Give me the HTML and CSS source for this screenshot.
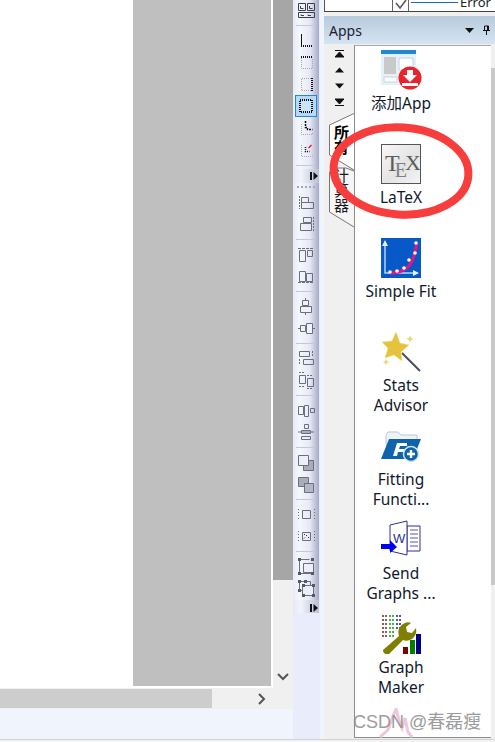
FILE: index.html
```html
<!DOCTYPE html>
<html lang="zh-CN">
<head>
    <meta charset="UTF-8">
    <meta name="viewport" content="width=device-width, initial-scale=1.0">
    <title>Apps</title>
    <link rel="stylesheet" href="styles.css">
</head>
<body>
    <div class="window">
        <div class="workspace">
            <!-- graph page and its scrollbars -->
            <div class="main">
                <div class="doc-row">
                    <div class="doc">
                        <div class="page"></div>
                        <div class="desk"></div>
                    </div>
                    <div class="vscroll">
                        <div class="vscroll-thumb"></div>
                        <svg class="chevron" width="12" height="8" viewBox="0 0 12 8"><path d="M1 1l5 5 5-5" fill="none" stroke="#555" stroke-width="2"/></svg>
                    </div>
                </div>
                <div class="hscroll">
                    <div class="hscroll-thumb"></div>
                    <svg class="chevron-right" width="8" height="12" viewBox="0 0 8 12"><path d="M1 1l5 5-5 5" fill="none" stroke="#555" stroke-width="2"/></svg>
                </div>
                <div class="main-foot"></div>
            </div>

            <!-- vertical toolbars -->
            <div class="dock">
                <div class="toolbar toolbar-top">
                    <div class="tool"><svg width="22" height="22" viewBox="0 0 22 22" fill="none" stroke="#3c3f4a"><path d="M3.500 4.500h7v7h-7zM12.500 4.500h7v7h-7zM3.500 13.500h16v5h-16z"/><path d="M5.500 7v2.500h3M14.500 7v2.500h3M6 15.500v1h3M13 15.500v1h3"/></svg></div>
                    <div class="sep"></div>
                    <div class="tool"><svg width="22" height="22" viewBox="0 0 22 22" fill="none"><path d="M6.500 5v12.500" stroke="#111"/><path d="M6 17h12" stroke="#111" stroke-width="2" stroke-dasharray="1 1"/></svg></div>
                    <div class="tool"><svg width="22" height="22" viewBox="0 0 22 22" fill="none"><path d="M6.500 7v10.500h11V7" stroke="#a4a6b2" stroke-dasharray="1 1"/><path d="M6 6h12" stroke="#111" stroke-width="2" stroke-dasharray="1 1"/></svg></div>
                    <div class="tool"><svg width="22" height="22" viewBox="0 0 22 22" fill="none"><path d="M16 5.500H6.500v12H16" stroke="#a4a6b2" stroke-dasharray="1 1"/><path d="M17 5v13" stroke="#111" stroke-width="2" stroke-dasharray="1 1"/></svg></div>
                    <div class="tool tool-on"><svg width="20" height="20" viewBox="0 0 20 20" fill="none"><path d="M4 4h12v12H4z" fill="#cbe4f8" stroke="#111" stroke-width="2" stroke-dasharray="1 1"/></svg></div>
                    <div class="tool"><svg width="22" height="22" viewBox="0 0 22 22" fill="none"><path d="M6.500 7v10.500h11v-2" stroke="#a4a6b2" stroke-dasharray="1 1"/><path d="M10.500 4v6.500h2v2h5" stroke="#111" stroke-width="1.500" stroke-dasharray="2 1"/></svg></div>
                    <div class="tool"><svg width="22" height="22" viewBox="0 0 22 22" fill="none"><path d="M6.500 6v11.500h11v-2" stroke="#a4a6b2" stroke-dasharray="1 1"/><path d="M10.500 8v4.500h4" stroke="#111" stroke-width="1.500" stroke-dasharray="1 1"/><path d="M13.500 9l3-3" stroke="#e02020" stroke-width="1.500"/></svg></div>
                    <div class="sep"></div>
                    <div class="toolbar-end toolbar-end-top"><svg width="8" height="8" viewBox="0 0 8 8"><path d="M0 0h2v8H0zM3.500 0L8 4 3.500 8z" fill="#111"/></svg></div>
                </div>

                <div class="toolbar toolbar-bottom">
                    <div class="grip"></div>
                    <div class="tool"><svg width="22" height="22" viewBox="0 0 22 22" fill="none" stroke="#6a6e80"><path d="M4.500 5v13" stroke-dasharray="2 1"/><path d="M6.500 6.500h7v5h-7zM6.500 11.500h12v6h-12z"/></svg></div>
                    <div class="tool"><svg width="22" height="22" viewBox="0 0 22 22" fill="none" stroke="#6a6e80"><path d="M18.500 4v14" stroke-dasharray="2 1"/><path d="M8.500 4.500h8v5h-8zM5.500 10.500h11v7h-11z"/></svg></div>
                    <div class="sep"></div>
                    <div class="tool"><svg width="22" height="22" viewBox="0 0 22 22" fill="none" stroke="#6a6e80"><path d="M3 5.500h15" stroke-dasharray="3 1"/><path d="M4.500 7.500h6v11h-6zM12.500 7.500h5v6h-5z"/></svg></div>
                    <div class="tool"><svg width="22" height="22" viewBox="0 0 22 22" fill="none" stroke="#6a6e80"><path d="M3 17.500h15" stroke-dasharray="3 1"/><path d="M4.500 6.500h6v10h-6zM11.500 8.500h6v8h-6z"/></svg></div>
                    <div class="sep"></div>
                    <div class="tool"><svg width="22" height="22" viewBox="0 0 22 22" fill="none" stroke="#6a6e80"><path d="M10.500 3v17"/><path d="M7.500 5.500h6v5h-6z" fill="#f0f2fb"/><path d="M5.500 11.500h11v6h-11z" fill="#f0f2fb"/></svg></div>
                    <div class="tool"><svg width="22" height="22" viewBox="0 0 22 22" fill="none" stroke="#6a6e80"><path d="M3 11.500h17"/><path d="M5.500 8.500h5v6h-5z" fill="#f0f2fb"/><path d="M11.500 6.500h6v10h-6z" fill="#f0f2fb"/></svg></div>
                    <div class="sep"></div>
                    <div class="tool"><svg width="22" height="22" viewBox="0 0 22 22" fill="none" stroke="#6a6e80"><path d="M4.500 4.500h10v5h-10zM8.500 12.500h10v5h-10z"/><path d="M17.500 4v6M4.500 12v6" stroke-dasharray="2 1"/></svg></div>
                    <div class="tool"><svg width="22" height="22" viewBox="0 0 22 22" fill="none" stroke="#6a6e80"><path d="M4.500 6.500h6v8h-6zM12.500 9.500h6v8h-6z"/><path d="M4 3.500h6M12 6.500h6M4 17.500h6M12 19.500h6" stroke-dasharray="2 1"/></svg></div>
                    <div class="sep"></div>
                    <div class="tool"><svg width="22" height="22" viewBox="0 0 22 22" fill="none" stroke="#6a6e80"><path d="M3.500 7.500h5v8h-5zM9.500 6.500h4v11h-4zM15.500 9.500h4v4h-4z"/></svg></div>
                    <div class="tool"><svg width="22" height="22" viewBox="0 0 22 22" fill="none" stroke="#6a6e80"><path d="M9.500 3.500h4v4h-4zM3 11h16"/><path d="M6.500 9.500h9v3h-9zM6.500 15.500h9v3h-9z"/></svg></div>
                    <div class="sep"></div>
                    <div class="tool"><svg width="22" height="22" viewBox="0 0 22 22" stroke="#6a6e80"><path d="M8.500 9.500h10v10h-10z" fill="#a9acb8"/><path d="M3.500 4.500h10v10h-10z" fill="#eceef9"/></svg></div>
                    <div class="tool"><svg width="22" height="22" viewBox="0 0 22 22" stroke="#6a6e80"><path d="M3.500 4.500h10v9h-10z" fill="#a9acb8"/><path d="M9.500 10.500h9v9h-9z" fill="#b4b7c3"/></svg></div>
                    <div class="sep"></div>
                    <div class="tool"><svg width="22" height="22" viewBox="0 0 22 22" fill="none" stroke="#6a6e80"><path d="M7.500 7.500h8v8h-8z"/><path d="M3.500 6v11M19.500 6v11" stroke-dasharray="1 2"/></svg></div>
                    <div class="tool"><svg width="22" height="22" viewBox="0 0 22 22" fill="none" stroke="#6a6e80"><path d="M7.500 7.500h8v8h-8z"/><path d="M9 13.500l1-1M11 11l1-1M13 13l1-1M9 9.500h1" stroke="#333"/><path d="M3.500 6v11M19.500 6v11" stroke-dasharray="1 2"/></svg></div>
                    <div class="sep"></div>
                    <div class="tool"><svg width="22" height="22" viewBox="0 0 22 22" stroke="#6a6e80"><path d="M4.500 4.500h10M4.500 4.500v14h14v-4" fill="none"/><path d="M8.500 8.500h10v9h-10z" fill="#eceef9"/><path d="M3 3h3v3H3zM16 3h3v3h-3zM3 17h3v3H3zM16 17h3v3h-3z" fill="#55586a" stroke="none"/></svg></div>
                    <div class="tool"><svg width="22" height="22" viewBox="0 0 22 22" stroke="#6a6e80"><path d="M4.500 4.500h11v6M4.500 4.500v9h4" fill="none"/><path d="M7.500 8.500h11v10h-11z" fill="#eceef9"/><path d="M3 3h3v3H3zM9 3h3v3H9zM3 12h3v3H3zM7 7h3v3H7zM17 7h3v3h-3zM7 17h3v3H7zM17 17h3v3h-3z" fill="#55586a" stroke="none"/></svg></div>
                    <div class="toolbar-end"><svg width="8" height="8" viewBox="0 0 8 8"><path d="M0 0h2v8H0zM3.500 0L8 4 3.500 8z" fill="#111"/></svg></div>
                </div>
            </div>
            <div class="gutter"></div>

            <!-- Apps panel -->
            <div class="panel">
                <div class="legend">
                    <div class="legend-check"><svg width="14" height="10" viewBox="0 0 14 10"><path d="M2 3l4 5 6-8" fill="none" stroke="#555" stroke-width="1.500"/></svg></div>
                    <div class="legend-line"></div>
                    <span class="legend-text">Error</span>
                </div>
                <div class="panel-head">
                    <span class="panel-title">Apps</span>
                    <svg class="panel-menu" width="9" height="5" viewBox="0 0 9 5"><path d="M0 0h9L4.500 5z" fill="#111"/></svg>
                    <svg class="panel-pin" width="9" height="10" viewBox="0 0 9 10"><path d="M2.500 1h4v4.500h-4zM1 5.500h7M4.500 6v4M5.500 1v4" fill="none" stroke="#111"/></svg>
                </div>
                <div class="panel-body">
                    <div class="rail">
                        <div class="rail-nav">
                            <svg width="9" height="8" viewBox="0 0 9 8"><path d="M0 .5h9M4.500 2L9 7H0z" stroke="#111" stroke-width="1" fill="#111"/></svg>
                            <svg width="9" height="8" viewBox="0 0 9 8"><path d="M4.500 1.500L9 6.500H0z" fill="#111"/></svg>
                            <svg width="9" height="8" viewBox="0 0 9 8"><path d="M0 1.500h9L4.500 6.500z" fill="#111"/></svg>
                            <svg width="9" height="8" viewBox="0 0 9 8"><path d="M0 1h9L4.500 6zM0 7.500h9" stroke="#111" stroke-width="1" fill="#111"/></svg>
                        </div>
                        <div class="tab tab-active">
                            <svg class="tab-shape" width="30" height="60" viewBox="0 0 30 60"><path d="M30 .5L5.500 12v30L30 57" fill="#fff" stroke="#777"/></svg>
                            <span class="tab-label">所有</span>
                        </div>
                        <div class="tab">
                            <svg class="tab-shape" width="30" height="62" viewBox="0 0 30 62"><path d="M30 4l-8-3h-8L5.500 5v40L30 60" fill="#f5f5f5" stroke="#777"/></svg>
                            <span class="tab-label">计算器</span>
                        </div>
                    </div>

                    <div class="gallery">
                        <div class="gallery-item">
                            <svg class="app-icon app-icon-add" width="46" height="40" viewBox="0 0 46 40">
                                <path d="M0 0h35v35H0z" fill="#e4f0fa"/>
                                <path d="M0 0h35v4H0z" fill="#1f88d0"/>
                                <path d="M3 7h12v17H3z" fill="#c9c9c9"/>
                                <path d="M18 8h14v12H18z" fill="#fff" stroke="#c2d4e2"/>
                                <path d="M3 27h13v5H3zM19 24h11v3H19z" fill="#fff" stroke="#c2d4e2"/>
                                <circle cx="29" cy="28" r="11.500" fill="#e9222c"/>
                                <path d="M26 20h6v5h4l-7 7-7-7h4zM21 33h16v3H21z" fill="#fff"/>
                            </svg>
                            <div class="app-label">添加App</div>
                        </div>
                        <div class="gallery-item">
                            <div class="tex-icon">
                                <span class="tex-t">T</span><span class="tex-e">E</span><span class="tex-x">X</span>
                            </div>
                            <div class="app-label">LaTeX</div>
                        </div>
                        <div class="gallery-item">
                            <svg class="app-icon" width="40" height="40" viewBox="0 0 40 40">
                                <path d="M0 0h40v40H0z" fill="#0659c6"/>
                                <path d="M4 7v28h31" fill="none" stroke="#b7d3f2" stroke-width="1.500"/>
                                <path d="M4 2l3 6H1zM38 35l-6 3v-6z" fill="#eaf3fc"/>
                                <path d="M8 35c8 0 14-1 20-7 5-6 6-14 8-23" fill="none" stroke="#e5157f" stroke-width="3"/>
                                <g fill="#fff"><circle cx="9" cy="34" r="1.800"/><circle cx="16" cy="33" r="1.800"/><circle cx="23" cy="30" r="1.800"/><circle cx="28" cy="22" r="1.800"/><circle cx="34" cy="15" r="1.800"/><circle cx="35" cy="5" r="1.800"/></g>
                            </svg>
                            <div class="app-label">Simple Fit</div>
                        </div>
                        <div class="gallery-item">
                            <svg class="app-icon" width="40" height="40" viewBox="0 0 40 40">
                                <path d="M21 21l18 18" stroke="#444e5c" stroke-width="2"/>
                                <path d="M15 0l4 11 9 2-8 7 1 9-8-6-9 3 3-10-6-6 10-1z" fill="#e6c33c" stroke="#f1dc8b" stroke-width=".5"/>
                                <path d="M29 3l1 3 3 1-3 1-1 3-1-3-3-1 3-1zM5 27l1 2 2 1-2 1-1 2-1-2-2-1 2-1z" fill="#efd374"/>
                            </svg>
                            <div class="app-label">Stats<br>Advisor</div>
                        </div>
                        <div class="gallery-item">
                            <svg class="app-icon" width="40" height="40" viewBox="0 0 40 40">
                                <path d="M5 9l2-3h10l3 3h16v9H5z" fill="#eef3f8" stroke="#b9c9d8"/>
                                <path d="M8 13h32l-8 20H0z" fill="#0f63ad"/>
                                <path d="M16 17h10v3h-7l-1 3h6l-1 3h-6l-1 4h-4z" fill="#fff"/>
                                <circle cx="30" cy="28" r="7.500" fill="#0f63ad" stroke="#cfe0ee" stroke-width="1.500"/>
                                <path d="M26 28h8M30 24v8" stroke="#fff" stroke-width="2.500"/>
                            </svg>
                            <div class="app-label">Fitting<br>Functi...</div>
                        </div>
                        <div class="gallery-item">
                            <svg class="app-icon" width="40" height="40" viewBox="0 0 40 40">
                                <path d="M26 6h13v25H26z" fill="#fff" stroke="#2c2f96"/>
                                <path d="M29 10h8M29 14h8M29 18h8M29 22h8M29 26h8" stroke="#5557b0"/>
                                <path d="M9 5l17-4v34L9 31z" fill="#fff" stroke="#2c2f96"/>
                                <text class="word-w" x="12" y="23">W</text>
                                <path d="M0 24h9v-4l7 7-7 6v-4H0z" fill="#0000ee"/>
                            </svg>
                            <div class="app-label">Send<br>Graphs ...</div>
                        </div>
                        <div class="gallery-item">
                            <svg class="app-icon" width="40" height="40" viewBox="0 0 40 40">
                                <path d="M1 2h5M1 6h5M1 10h5M1 14h5M1 18h5M1 22h5" stroke="#8b1a1a" stroke-width="1.500" stroke-dasharray="2 1"/>
                                <path d="M8 2h5M8 6h5M8 10h5M8 14h5M8 18h5M8 22h5" stroke="#129a12" stroke-width="1.500" stroke-dasharray="2 1"/>
                                <path d="M15 2h5M15 6h5M15 10h5M15 14h5" stroke="#1c1ca8" stroke-width="1.500" stroke-dasharray="2 1"/>
                                <path d="M22 33h5v7h-5z" fill="#800000"/>
                                <path d="M29 26h5v14h-5z" fill="#008000"/>
                                <path d="M35 20h5v20h-5z" fill="#000080"/>
                                <path d="M2 36l16-14c-2-6 1-11 6-13 2-1 4-1 6 0l-5 4 1 5 5 1 4-5c1 5-1 10-6 12-3 1-5 1-7 0L8 40c-2 1-6 0-6-4z" fill="#808000"/>
                            </svg>
                            <div class="app-label">Graph<br>Maker</div>
                        </div>
                    </div>
                    <div class="gallery-scroll"><div class="gallery-thumb"></div></div>
                </div>
            </div>
        </div>
        <div class="statusbar"></div>
    </div>

    <!-- red ring drawn over the screenshot -->
    <svg class="ring" width="150" height="104" viewBox="0 0 150 104"><ellipse cx="75" cy="52" rx="67.500" ry="43.500" transform="rotate(4 75 52)" fill="none" stroke="#f83d3d" stroke-width="8"/></svg>

    <!-- watermark -->
    <div class="watermark">
        <svg class="watermark-wave" width="34" height="30" viewBox="0 0 34 30"><path d="M1 29L9 22 14 8 17 1 20 12 23 20 26 10 29 24 33 29" fill="none" stroke="#f0c6da" stroke-width="3"/></svg>
        <span class="watermark-text">CSDN @春磊瘦</span>
    </div>
</body>
</html>
```

FILE: styles.css
```css
/* Origin workspace with Apps panel */
* {
    box-sizing: border-box;
}

html, body {
    margin: 0;
    height: 100%;
    overflow: hidden;
    background: #f0f0f0;
    font-family: "Noto Sans", "Noto Sans CJK SC", sans-serif;
}

.window {
    display: flex;
    flex-direction: column;
    height: 742px;
}

.workspace {
    display: flex;
    height: 739px;
}

.statusbar {
    flex: 1;
    background: #f3f3f3;
    border-top: 1px solid #d2d2d2;
}

/* left side */
.main {
    display: flex;
    flex-direction: column;
    width: 293px;
}

.doc-row {
    display: flex;
    height: 688px;
}

.doc {
    display: flex;
    width: 273px;
    height: 688px;
    padding: 0 2px 2px 0;
    background: #fff;
}

.page {
    width: 133px;
    background: #fff;
}

.desk {
    flex: 1;
    background: #bfbfbf;
}

.vscroll {
    display: flex;
    flex-direction: column;
    align-items: center;
    width: 20px;
    background: #f0f0f0;
}

.vscroll-thumb {
    width: 100%;
    height: 580px;
    background: #a6a6a6;
}

.chevron {
    margin-top: 93px;
}

.hscroll {
    display: flex;
    align-items: center;
    height: 21px;
    background: #f0f0f0;
}

.hscroll-thumb {
    width: 212px;
    height: 19px;
    background: #cdcdcd;
}

.chevron-right {
    margin-left: 46px;
}

.main-foot {
    flex: 1;
    background: #f0f4fd;
}

/* toolbars */
.dock {
    width: 27px;
    background: #e9ecfb;
}

.toolbar {
    display: flex;
    flex-direction: column;
    width: 26px;
    padding-left: 2px;
    background: linear-gradient(to right, #e8eaf6, #f5f7fe 25%, #e6e8f5 65%, #a7aac6);
}

.toolbar-top {
    height: 186px;
    margin-top: -1px;
}

.toolbar-bottom {
    height: 427px;
    border-radius: 0 0 3px 3px;
}

.tool {
    display: flex;
    align-items: center;
    justify-content: center;
    flex: none;
    width: 22px;
    height: 22px;
}

.tool-on {
    background: #b6d9f5;
    border: 1px solid #1f87e0;
}

.sep {
    flex: none;
    width: 20px;
    height: 8px;
    margin-left: 1px;
    background: linear-gradient(#c6c8cf, #c6c8cf) center / 100% 1px no-repeat;
}

.toolbar-end {
    display: flex;
    align-items: center;
    justify-content: flex-end;
    flex: none;
    height: 13px;
    margin: 1px 0 0 -2px;
    padding: 2px 1px 0 0;
    background: linear-gradient(to right, #e6e8f5, #f2f3fb 30%, #bcbed4);
}

.toolbar-end-top {
    height: 14px;
    margin-top: 0;
    padding-top: 0;
}

.grip {
    flex: none;
    height: 6px;
    margin: 0 2px;
    background: repeating-linear-gradient(to right, #a4a7b8 0 2px, transparent 2px 4px) 0 1px / 100% 2px no-repeat;
}

.gutter {
    width: 4px;
    background: #f0f4fd;
}

/* Apps panel */
.panel {
    display: flex;
    flex-direction: column;
    flex: 1;
    background: #f0f0f0;
}

.legend {
    display: flex;
    align-items: center;
    flex: none;
    height: 12px;
    padding-left: 67px;
    overflow: hidden;
    background: #fff;
    border-left: 1px solid #555;
    border-bottom: 1px solid #444;
    margin-bottom: 4px;
    font-size: 13px;
    color: #222;
}

.legend-check {
    display: flex;
    flex: none;
    width: 17px;
    height: 11px;
    justify-content: center;
    border-left: 1px solid #666;
    border-right: 1px solid #666;
}

.legend-line {
    flex: none;
    width: 47px;
    height: 1px;
    margin: 0 2px 0 2px;
    transform: translateY(-3px);
    background: #1668c8;
}

.legend-text {
    transform: translateY(-4px);
}

.panel-head {
    display: flex;
    align-items: center;
    flex: none;
    height: 28px;
    padding: 0 4px 0 5px;
    background: linear-gradient(#b7cadb, #d6e4f2);
}

.panel-title {
    flex: 1;
    font-size: 14px;
    color: #1c2033;
}

.panel-menu {
    margin-right: 8px;
}

.panel-body {
    display: flex;
    flex: 1;
    min-height: 0;
}

.rail {
    flex: none;
    width: 30px;
}

.rail-nav {
    display: flex;
    flex-direction: column;
    align-items: center;
    gap: 8px;
    height: 69px;
    padding: 6px 0 0 1px;
}

.tab {
    position: relative;
    display: flex;
    justify-content: center;
    height: 54px;
    padding: 12px 2px 0 5px;
}

.tab + .tab {
    height: 61px;
    padding-top: 1px;
}

.tab-shape {
    position: absolute;
    left: 0;
    top: 0;
}

.tab-label {
    position: relative;
    writing-mode: vertical-rl;
    font-size: 15px;
    line-height: 15px;
    color: #1a1a1a;
}

.tab-active .tab-label {
    font-weight: 700;
    color: #000;
}

.gallery {
    display: flex;
    flex-direction: column;
    flex: 1;
    height: 693px;
    margin-top: 1px;
    padding-top: 4px;
    background: #fff;
    border-left: 1px solid #8c8c8c;
    border-top: 1px solid #a8a8a8;
    border-bottom: 1px solid #8c8c8c;
}

.gallery-item {
    display: flex;
    flex-direction: column;
    align-items: center;
    flex: none;
    width: 92px;
    height: 94px;
}

.app-icon {
    display: block;
    flex: none;
    margin-bottom: 3px;
}

.app-icon-add {
    margin-left: 6px;
}

.app-label {
    font-size: 15.500px;
    line-height: 20px;
    white-space: nowrap;
    text-align: center;
    color: #10182c;
}

.gallery-scroll {
    flex: none;
    width: 4px;
    padding-top: 24px;
}

.gallery-thumb {
    height: 517px;
    background: #c8c8c8;
}

/* LaTeX logo, a bitmap in the app */
.tex-icon {
    display: flex;
    flex: none;
    width: 40px;
    height: 40px;
    margin-bottom: 3px;
    padding: 6px 0 0 3px;
    border: 1px solid #555;
    background: linear-gradient(135deg, #f8f8f8, #e4e4e4 55%, #f4f4f4);
    font-family: "Liberation Serif", serif;
    font-size: 24px;
    line-height: 24px;
    color: #5c5c5c;
}

.tex-t {
    letter-spacing: -5px;
}

.tex-e {
    margin-top: 7px;
    font-size: 20px;
    letter-spacing: -2px;
    color: #808080;
}

.tex-x {
    font-size: 22px;
    letter-spacing: -1px;
}

.word-w {
    font-family: "Liberation Sans", sans-serif;
    font-size: 13px;
    fill: #2c2f96;
}

/* overlays */
.ring {
    position: absolute;
    left: 326px;
    top: 119px;
}

.watermark {
    position: absolute;
    left: 353px;
    top: 708px;
    width: 130px;
    height: 30px;
}

.watermark-wave {
    position: absolute;
    left: 26px;
    top: 0;
}

.watermark-text {
    position: absolute;
    left: 0;
    top: 1px;
    white-space: nowrap;
    font-family: "Liberation Sans", "Noto Sans CJK SC", sans-serif;
    font-size: 18px;
    line-height: 26px;
    color: #8c8c8c;
    opacity: 0.85;
}
```
